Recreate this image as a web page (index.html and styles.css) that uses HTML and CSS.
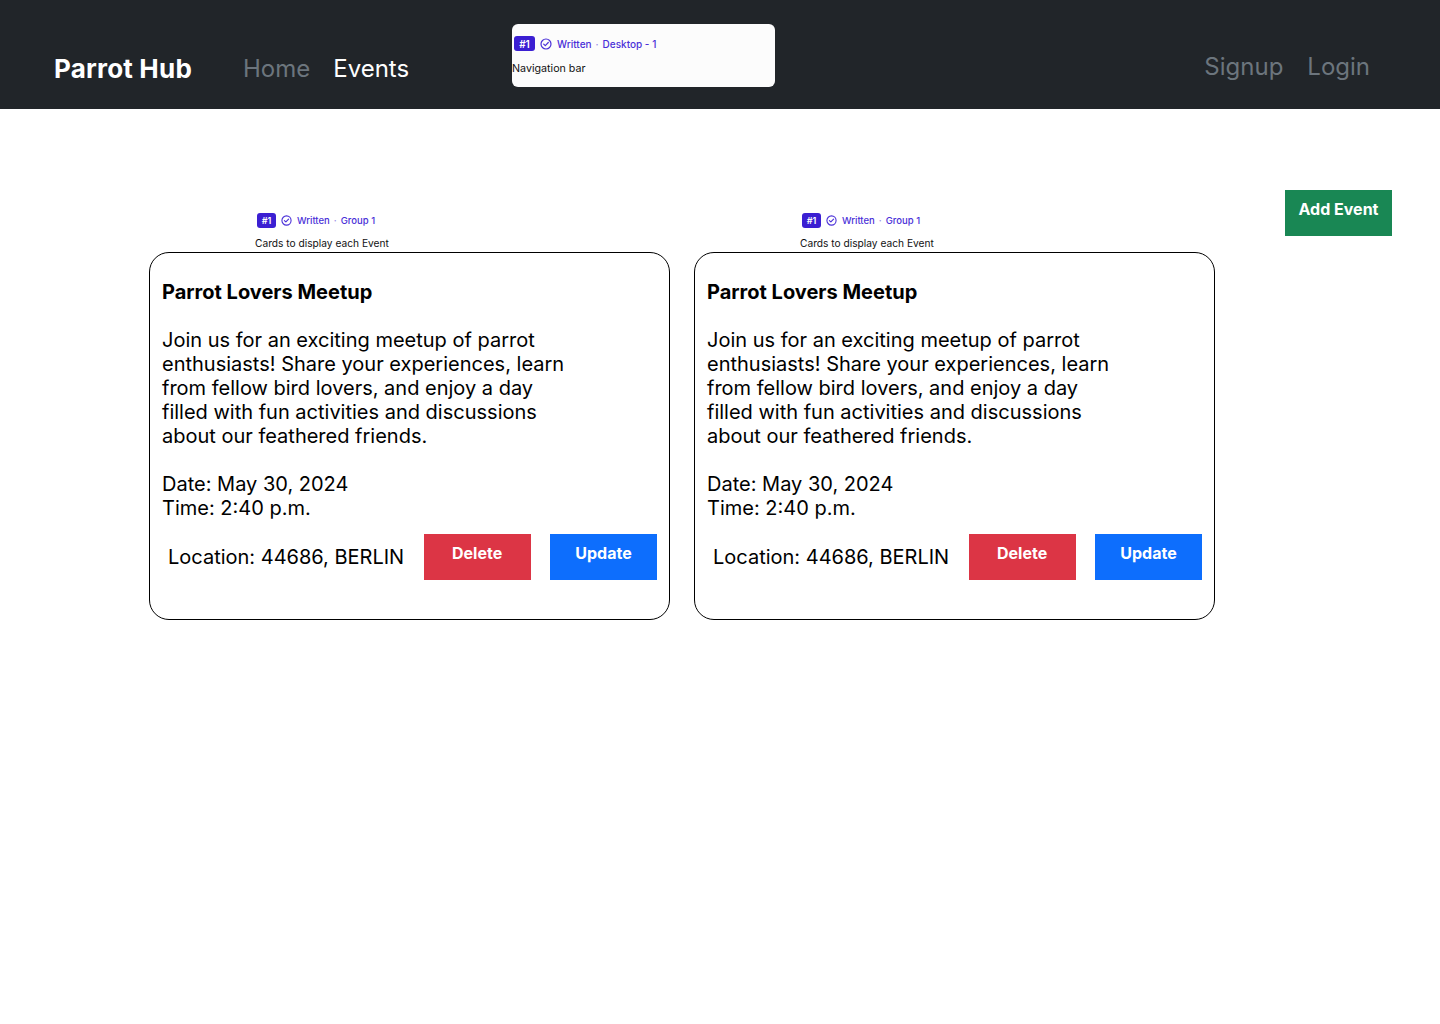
FILE: index.html
```html
<!DOCTYPE html>
<html lang="en">
<head>
<meta charset="utf-8">
<title>Parrot Hub</title>
<link rel="stylesheet" href="styles.css">
</head>
<body>
<nav class="navbar">
  <div class="nav-left">
    <a class="brand" href="#">Parrot Hub</a>
    <a class="nav-link" href="#">Home</a>
    <a class="nav-link active" href="#">Events</a>
  </div>
  <div class="nav-right">
    <a class="nav-link" href="#">Signup</a>
    <a class="nav-link" href="#">Login</a>
  </div>
  <div class="note note-nav">
    <div class="note-row">
      <span class="badge">#1</span>
      <svg class="check" viewBox="0 0 12 12" width="12" height="12"><circle cx="6" cy="6" r="5" fill="none" stroke="currentColor" stroke-width="1.2"/><path d="M3.7 6.1 L5.3 7.6 L8.3 4.5" fill="none" stroke="currentColor" stroke-width="1.2" stroke-linecap="round" stroke-linejoin="round"/></svg>
      <span class="note-status">Written</span>
      <span class="note-dot">·</span>
      <span class="note-frame">Desktop - 1</span>
    </div>
    <div class="note-caption">Navigation bar</div>
  </div>
</nav>

<main class="main">
  <div class="cards">
    <div class="card-col">
      <div class="note note-card">
        <div class="note-row">
          <span class="badge">#1</span>
          <svg class="check" viewBox="0 0 12 12" width="11" height="11"><circle cx="6" cy="6" r="5" fill="none" stroke="currentColor" stroke-width="1.2"/><path d="M3.7 6.1 L5.3 7.6 L8.3 4.5" fill="none" stroke="currentColor" stroke-width="1.2" stroke-linecap="round" stroke-linejoin="round"/></svg>
          <span class="note-status">Written</span>
          <span class="note-dot">·</span>
          <span class="note-frame">Group 1</span>
        </div>
        <div class="note-caption">Cards to display each Event</div>
      </div>
      <article class="card">
        <h2 class="card-title">Parrot Lovers Meetup</h2>
        <p class="card-desc">Join us for an exciting meetup of parrot enthusiasts! Share your experiences, learn from fellow bird lovers, and enjoy a day filled with fun activities and discussions about our feathered friends.</p>
        <p class="card-meta">Date: May 30, 2024<br>Time: 2:40 p.m.</p>
        <div class="card-row">
          <span class="location">Location: 44686, BERLIN</span>
          <button class="btn btn-danger">Delete</button>
          <button class="btn btn-primary">Update</button>
        </div>
      </article>
    </div>
    <div class="card-col">
      <div class="note note-card">
        <div class="note-row">
          <span class="badge">#1</span>
          <svg class="check" viewBox="0 0 12 12" width="11" height="11"><circle cx="6" cy="6" r="5" fill="none" stroke="currentColor" stroke-width="1.2"/><path d="M3.7 6.1 L5.3 7.6 L8.3 4.5" fill="none" stroke="currentColor" stroke-width="1.2" stroke-linecap="round" stroke-linejoin="round"/></svg>
          <span class="note-status">Written</span>
          <span class="note-dot">·</span>
          <span class="note-frame">Group 1</span>
        </div>
        <div class="note-caption">Cards to display each Event</div>
      </div>
      <article class="card">
        <h2 class="card-title">Parrot Lovers Meetup</h2>
        <p class="card-desc">Join us for an exciting meetup of parrot enthusiasts! Share your experiences, learn from fellow bird lovers, and enjoy a day filled with fun activities and discussions about our feathered friends.</p>
        <p class="card-meta">Date: May 30, 2024<br>Time: 2:40 p.m.</p>
        <div class="card-row">
          <span class="location">Location: 44686, BERLIN</span>
          <button class="btn btn-danger">Delete</button>
          <button class="btn btn-primary">Update</button>
        </div>
      </article>
    </div>
  </div>
  <button class="btn btn-success">Add Event</button>
</main>
</body>
</html>
```

FILE: styles.css
```css
* { box-sizing: border-box; }

html, body {
  margin: 0;
  padding: 0;
  background: #ffffff;
  font-family: Inter, "Noto Sans", "Liberation Sans", sans-serif;
  color: #000;
}

a { text-decoration: none; }

.navbar {
  position: relative;
  height: 109px;
  background: #212529;
  display: flex;
  align-items: center;
  justify-content: space-between;
  padding: 29px 70px 0 54px;
}

.nav-left, .nav-right {
  display: flex;
  align-items: center;
  gap: 24px;
}

.nav-left { gap: 23px; }

.nav-right { margin-bottom: 5px; }

.brand {
  color: #ffffff;
  font-size: 26px;
  font-weight: 700;
  margin-right: 28px;
  line-height: 1.21;
  letter-spacing: 0.2px;
}

.nav-link {
  color: #6c757d;
  font-size: 24px;
  line-height: 1.21;
}

.nav-link.active { color: #ffffff; }

/* annotation notes */
.note-nav {
  position: absolute;
  left: 512px;
  top: 24px;
  width: 263px;
  height: 63px;
  background: #fcfcfc;
  border-radius: 6px;
  padding-top: 12px;
}

.note-row {
  display: flex;
  align-items: center;
  color: #4a30d8;
  font-weight: 500;
}

.note-nav .note-row {
  padding-left: 2px;
  font-size: 10px;
  height: 15px;
}

.badge {
  background: #3b1fd2;
  color: #ffffff;
  border-radius: 3px;
  font-weight: 600;
  display: inline-flex;
  align-items: center;
  justify-content: center;
}

.note-nav .badge {
  width: 21px;
  height: 15px;
  font-size: 10px;
}

.check {
  color: #4a30d8;
  display: block;
}

.note-nav .check { margin: 0 5px 0 5px; }

.note-dot {
  color: #9a8ce6;
  margin: 0 5px;
}

.note-nav .note-dot { margin: 0 4px; }

.note-caption {
  color: #111;
  font-size: 10px;
  line-height: 14px;
}

.note-nav .note-caption {
  margin-top: 11px;
  font-size: 10.7px;
}

.note-card {
  margin-left: 106px;
  height: 40px;
}

.note-card .note-row {
  padding-left: 2px;
  font-size: 9.5px;
  height: 16px;
}

.note-card .badge {
  width: 19px;
  height: 15px;
  font-size: 9px;
}

.note-card .check { margin: 0 5px 0 5px; }

.note-card .note-dot { margin: 0 4px; }

.note-card .note-caption {
  margin-top: 8px;
  font-size: 10.2px;
}

/* main */
.main {
  display: flex;
  align-items: flex-start;
  padding: 81px 48px 0 149px;
}

.cards {
  display: flex;
  gap: 24px;
  margin-top: 22px;
}

.card-col {
  width: 521px;
  display: flex;
  flex-direction: column;
}

.card {
  width: 521px;
  border: 1px solid #000;
  border-radius: 20px;
  padding: 27px 12px 39px 12px;
}

.card-title {
  margin: 0 0 24px 0;
  font-size: 20px;
  line-height: 24px;
  font-weight: 700;
}

.card-desc {
  margin: 0 0 24px 0;
  font-size: 20px;
  line-height: 24px;
  max-width: 420px;
}

.card-meta {
  margin: 0;
  font-size: 20px;
  line-height: 24px;
}

.card-row {
  display: flex;
  align-items: center;
  justify-content: space-between;
  margin-top: 14px;
}

.location {
  font-size: 20px;
  line-height: 24px;
  padding-left: 6px;
}

.btn {
  width: 107px;
  height: 46px;
  border: none;
  border-radius: 0;
  color: #ffffff;
  font-family: Inter, "Noto Sans", "Liberation Sans", sans-serif;
  font-size: 16px;
  font-weight: 700;
  line-height: 24px;
  padding: 7px 0 15px 0;
  cursor: pointer;
}

.btn-danger { background: #dc3545; }
.btn-primary { background: #0d6efd; }
.btn-success {
  background: #198754;
  margin-left: auto;
  flex-shrink: 0;
}
```
